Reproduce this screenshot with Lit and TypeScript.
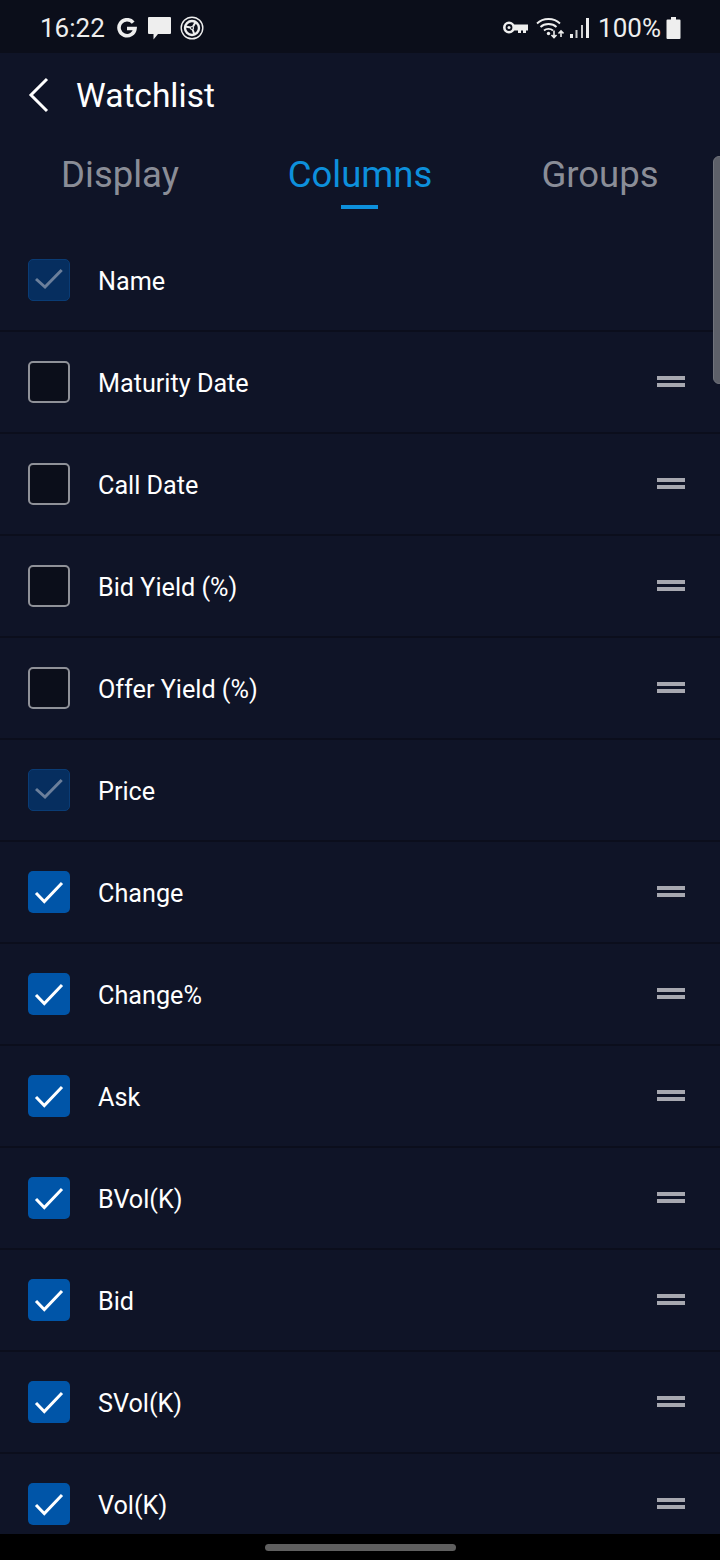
import { LitElement, css, html, svg } from 'lit'
import { customElement } from 'lit/decorators.js'
import { classMap } from 'lit/directives/class-map.js'

type Col = { name: string; state: 'off' | 'on' | 'locked' }

const COLUMNS: Col[] = [
  { name: 'Name', state: 'locked' },
  { name: 'Maturity Date', state: 'off' },
  { name: 'Call Date', state: 'off' },
  { name: 'Bid Yield (%)', state: 'off' },
  { name: 'Offer Yield (%)', state: 'off' },
  { name: 'Price', state: 'locked' },
  { name: 'Change', state: 'on' },
  { name: 'Change%', state: 'on' },
  { name: 'Ask', state: 'on' },
  { name: 'BVol(K)', state: 'on' },
  { name: 'Bid', state: 'on' },
  { name: 'SVol(K)', state: 'on' },
  { name: 'Vol(K)', state: 'on' },
]

const checkOn = svg`<path d="M8 22 L16.300 30.500 L34 12" fill="none" stroke="currentColor" stroke-width="3"/>`
const checkLocked = svg`<path d="M8 20 L17 28 L33.700 11" fill="none" stroke="currentColor" stroke-width="3"/>`

@customElement('app-root')
export class AppRoot extends LitElement {
  protected render() {
    return html`
      <div class="status">
        <div class="left">
          <span class="time">16:22</span>
          <svg class="g" viewBox="0 0 20 20" width="20" height="20" fill="none" stroke="#eee" stroke-width="3.600">
            <path d="M16.200 4.600A8 8 0 1 0 18 10.500H10"/>
          </svg>
          <svg class="bubble" viewBox="0 0 23 23" width="23" height="23">
            <path d="M1 0h21a1 1 0 0 1 1 1v15a1 1 0 0 1-1 1H10l-4.500 5.500V17H1a1 1 0 0 1-1-1V1a1 1 0 0 1 1-1z" fill="#eee"/>
          </svg>
          <svg class="wheel" viewBox="0 0 24 24" width="24" height="24" fill="none" stroke="#eee">
            <circle cx="12" cy="12" r="10.800" stroke-width="1.400"/>
            <circle cx="12" cy="12" r="7" stroke-width="2.400"/>
            <circle cx="12" cy="12" r="1.500" stroke-width="1.200"/>
            <path d="M13 10.500L16 5.500M10.500 11.500L5.500 10.500M12.500 13.500L14.500 18.500" stroke-width="2"/>
          </svg>
        </div>
        <div class="right">
          <svg class="key" viewBox="0 0 25 13" width="25" height="13" fill="none" stroke="#eee">
            <circle cx="6" cy="6.500" r="4.700" stroke-width="2.600"/>
            <path d="M10 3.500h15v6h-2v2.500h-3V9.500h-2v2.500h-3V9.500h-5z" fill="#eee" stroke="none"/>
            <circle cx="6" cy="6.500" r="1.500" fill="#eee" stroke="none"/>
          </svg>
          <svg class="wifi" viewBox="0 0 28 24" width="28" height="24" fill="none" stroke="#eee" stroke-width="1.800">
            <path d="M1 7.500c6-6 17-6 23 0M4.500 11c4-4 12-4 16 0M8 14.500c2.500-2.300 6.500-2.300 9 0"/>
            <circle cx="12.500" cy="17.500" r="1.700" fill="#eee" stroke="none"/>
            <path d="M18 14.500v7M15.500 19l2.500 2.500 2.500-2.500M25 21v-6M22.500 17.500l2.500-2.500 2.500 2.500" stroke-width="1.600"/>
          </svg>
          <svg class="signal" viewBox="0 0 19 22" width="19" height="22" fill="#eee">
            <rect x="0" y="17" width="3" height="4"/>
            <rect x="5.500" y="13" width="2" height="8" opacity=".85"/>
            <rect x="11" y="8" width="2" height="13" opacity=".85"/>
            <rect x="16" y="1" width="3" height="20"/>
          </svg>
          <span class="pct">100%</span>
          <svg viewBox="0 0 15 22" width="15" height="22" fill="#eee">
            <path d="M5 0h5v2.500h3.500a1 1 0 0 1 1 1V21a1 1 0 0 1-1 1h-12a1 1 0 0 1-1-1V3.500a1 1 0 0 1 1-1H5z"/>
          </svg>
        </div>
      </div>

      <header>
        <svg viewBox="0 0 22 36" width="22" height="36" fill="none" stroke="#fff" stroke-width="3">
          <path d="M19 2 L3 18 L19 34"/>
        </svg>
        <h1>Watchlist</h1>
      </header>

      <nav>
        <div class="tab">Display</div>
        <div class="tab active">Columns</div>
        <div class="tab">Groups</div>
      </nav>

      <main>
        ${COLUMNS.map(
          (c) => html`
            <div class="row">
              <span class=${classMap({ box: true, on: c.state === 'on', locked: c.state === 'locked' })}>
                ${c.state !== 'off'
                  ? html`<svg viewBox="0 0 42 42" width="42" height="42">${c.state === 'on' ? checkOn : checkLocked}</svg>`
                  : null}
              </span>
              <span class="label">${c.name}</span>
              ${c.state !== 'locked' ? html`<span class="drag"></span>` : null}
            </div>
          `,
        )}
      </main>

      <div class="scroll"></div>
      <footer><span class="pill"></span></footer>
    `
  }

  static styles = css`
    :host {
      display: flex;
      flex-direction: column;
      position: relative;
      width: 720px;
      height: 1560px;
      overflow: hidden;
      background: #0f1427;
      font-family: Roboto, 'Noto Sans', sans-serif;
      color: #fff;
    }

    .status {
      display: flex;
      flex: none;
      justify-content: space-between;
      align-items: center;
      height: 53px;
      padding: 2px 39px 0 40px;
      box-sizing: border-box;
      background: #0b0e1a;
      color: #eee;
      font-size: 26px;
    }

    .left,
    .right {
      display: flex;
      align-items: center;
    }

    .g {
      margin: 0 11px 0 12px;
    }

    .bubble {
      margin: 2px 9px 0 0;
    }

    .wifi {
      margin-left: 8px;
    }

    .signal {
      margin: 0 0 0 6px;
    }

    .pct {
      margin: 0 5px 0 9px;
    }

    header {
      display: flex;
      flex: none;
      align-items: center;
      gap: 26px;
      height: 84px;
      padding: 0 0 0 28px;
      box-sizing: border-box;
    }

    h1 {
      margin: 2px 0 0;
      font-size: 33.500px;
      font-weight: 400;
      line-height: 82px;
    }

    nav {
      display: grid;
      flex: none;
      grid-template-columns: 240px 240px 240px;
      height: 93px;
    }

    .tab {
      position: relative;
      padding-top: 13px;
      text-align: center;
      font-size: 36.500px;
      line-height: 50px;
      color: #8a8d97;
    }

    .tab.active {
      color: #0d90dc;
    }

    .tab.active::after {
      content: '';
      position: absolute;
      left: 101px;
      top: 68px;
      width: 37px;
      height: 4px;
      background: #0d90dc;
    }

    main {
      flex: 1;
      min-height: 0;
    }

    .row {
      display: flex;
      align-items: center;
      height: 102px;
      padding: 0 35px 0 28px;
      box-sizing: border-box;
      border-bottom: 2px solid #0b0e1c;
    }

    .box {
      flex: none;
      width: 42px;
      height: 42px;
      box-sizing: border-box;
      border: 2px solid #8f9198;
      border-radius: 5px;
      background: #0b0e1a;
    }

    .box svg {
      display: block;
    }

    .box.on {
      border: none;
      background: #0055a8;
      color: #fff;
    }

    .box.locked {
      background: #062e5f;
      border: 1px solid #0a3c75;
      color: #6b7f9b;
    }

    .box.locked svg {
      margin: -1px;
    }

    .label {
      flex: 1;
      margin: 4px 0 0 28px;
      font-size: 25.200px;
      line-height: 32px;
      color: #fff;
    }

    .drag {
      flex: none;
      width: 28px;
      height: 11px;
      margin-top: -2px;
      box-sizing: border-box;
      border-top: 4px solid #a7a8b0;
      border-bottom: 4px solid #a7a8b0;
    }

    .scroll {
      position: absolute;
      left: 713px;
      top: 156px;
      width: 12px;
      height: 228px;
      box-sizing: border-box;
      border: 1px solid #70737c;
      border-radius: 6px;
      background: #5d6069;
    }

    footer {
      display: flex;
      flex: none;
      justify-content: center;
      align-items: center;
      height: 26px;
      background: #000;
    }

    .pill {
      width: 191px;
      height: 7px;
      border-radius: 4px;
      background: #5f5f5f;
    }
  `
}
